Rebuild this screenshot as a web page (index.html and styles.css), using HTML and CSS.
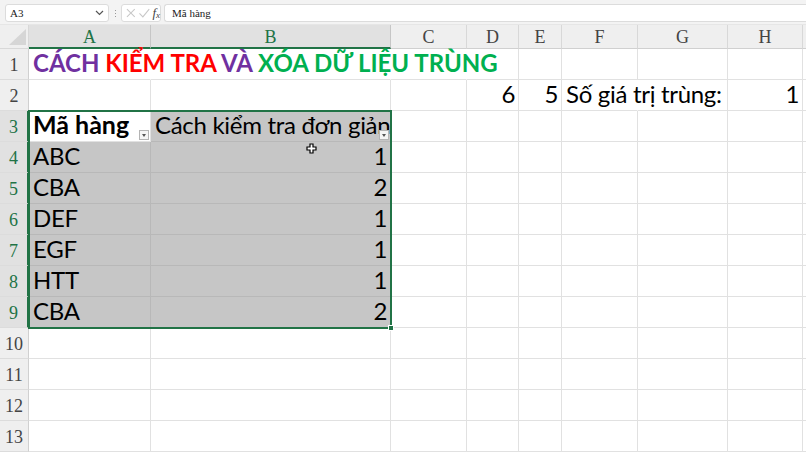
FILE: index.html
```html
<!DOCTYPE html>
<html>
<head>
<meta charset="utf-8">
<link rel="stylesheet" href="styles.css">
</head>
<body>
<div class="topbar">
  <div class="namebox"><span>A3</span>
    <svg class="chev" width="9" height="6" viewBox="0 0 9 6"><path d="M1 1 L4.5 4.5 L8 1" fill="none" stroke="#555" stroke-width="1.2"/></svg>
  </div>
  <div class="dots"><i></i><i></i><i></i></div>
  <div class="fxbox">
    <svg width="12" height="12" viewBox="0 0 12 12"><path d="M2 2 L10 10 M10 2 L2 10" stroke="#c8c8c8" stroke-width="1.1"/></svg>
    <svg width="13" height="12" viewBox="0 0 13 12"><path d="M1.5 6.5 L5 10 L11.5 2" fill="none" stroke="#c8c8c8" stroke-width="1.1"/></svg>
    <span class="fx">f<sub>x</sub></span>
  </div>
  <div class="formula">Mã hàng</div>
</div>

<div class="sheet">
  <div class="grid">
    <div class="corner"><svg width="22" height="18" viewBox="0 0 22 18"><path d="M21 1 L21 17 L4 17 Z" fill="#d6d6d6"/></svg></div>
    <div class="ch sel">A</div>
    <div class="ch sel">B</div>
    <div class="ch">C</div>
    <div class="ch">D</div>
    <div class="ch">E</div>
    <div class="ch">F</div>
    <div class="ch">G</div>
    <div class="ch">H</div>
    <div class="ch last"></div>

    <!-- row 1 -->
    <div class="rh">1</div>
    <div class="c nr title"><span><span class="purple">CÁCH</span> <span class="red">KIỂM TRA</span> <span class="purple">VÀ</span> <span class="green">XÓA DỮ LIỆU TRÙNG</span></span></div>
    <div class="c nr"></div><div class="c nr"></div><div class="c"></div><div class="c"></div><div class="c"></div><div class="c"></div><div class="c"></div><div class="c last"></div>

    <!-- row 2 -->
    <div class="rh">2</div>
    <div class="c"></div><div class="c"></div><div class="c"></div>
    <div class="c num">6</div><div class="c num">5</div>
    <div class="c nr txt">Số giá trị trùng:</div><div class="c"></div>
    <div class="c num">1</div><div class="c last"></div>

    <!-- row 3 -->
    <div class="rh rsel">3</div>
    <div class="c active bold txt">Mã hàng<span class="filt"></span></div>
    <div class="c s txt">Cách kiểm tra đơn giản<span class="filt"></span></div>
    <div class="c"></div><div class="c"></div><div class="c"></div><div class="c"></div><div class="c"></div><div class="c"></div><div class="c last"></div>

    <div class="rh rsel">4</div>
    <div class="c s txt">ABC</div><div class="c s num">1</div>
    <div class="c"></div><div class="c"></div><div class="c"></div><div class="c"></div><div class="c"></div><div class="c"></div><div class="c last"></div>

    <div class="rh rsel">5</div>
    <div class="c s txt">CBA</div><div class="c s num">2</div>
    <div class="c"></div><div class="c"></div><div class="c"></div><div class="c"></div><div class="c"></div><div class="c"></div><div class="c last"></div>

    <div class="rh rsel">6</div>
    <div class="c s txt">DEF</div><div class="c s num">1</div>
    <div class="c"></div><div class="c"></div><div class="c"></div><div class="c"></div><div class="c"></div><div class="c"></div><div class="c last"></div>

    <div class="rh rsel">7</div>
    <div class="c s txt">EGF</div><div class="c s num">1</div>
    <div class="c"></div><div class="c"></div><div class="c"></div><div class="c"></div><div class="c"></div><div class="c"></div><div class="c last"></div>

    <div class="rh rsel">8</div>
    <div class="c s txt">HTT</div><div class="c s num">1</div>
    <div class="c"></div><div class="c"></div><div class="c"></div><div class="c"></div><div class="c"></div><div class="c"></div><div class="c last"></div>

    <div class="rh rsel">9</div>
    <div class="c s txt">CBA</div><div class="c s num">2</div>
    <div class="c"></div><div class="c"></div><div class="c"></div><div class="c"></div><div class="c"></div><div class="c"></div><div class="c last"></div>

    <div class="rh">10</div>
    <div class="c"></div><div class="c"></div><div class="c"></div><div class="c"></div><div class="c"></div><div class="c"></div><div class="c"></div><div class="c"></div><div class="c last"></div>
    <div class="rh">11</div>
    <div class="c"></div><div class="c"></div><div class="c"></div><div class="c"></div><div class="c"></div><div class="c"></div><div class="c"></div><div class="c"></div><div class="c last"></div>
    <div class="rh">12</div>
    <div class="c"></div><div class="c"></div><div class="c"></div><div class="c"></div><div class="c"></div><div class="c"></div><div class="c"></div><div class="c"></div><div class="c last"></div>
    <div class="rh">13</div>
    <div class="c"></div><div class="c"></div><div class="c"></div><div class="c"></div><div class="c"></div><div class="c"></div><div class="c"></div><div class="c"></div><div class="c last"></div>
  </div>
  <div class="selection"><span class="handle"></span></div>
  <svg class="cursor" width="11" height="11" viewBox="0 0 11 11"><path d="M4 1 H7 V4 H10 V7 H7 V10 H4 V7 H1 V4 H4 Z" fill="#fff" stroke="#000" stroke-width="1.2"/></svg>
</div>
</body>
</html>
```
FILE: styles.css
```css
* { box-sizing: border-box; }
html, body { margin: 0; padding: 0; background: #fff; }
body { width: 806px; height: 455px; overflow: hidden; font-family: "Lato", "Liberation Sans", sans-serif; }

.topbar {
  height: 25px;
  background: #f3f3f3;
  display: flex;
  align-items: flex-start;
  padding-top: 4px;
  padding-left: 5px;
  border-bottom: 1px solid #e6e6e6;
}
.namebox {
  width: 104px; height: 18px;
  background: #fff;
  border: 1px solid #dcdcdc;
  border-radius: 3px;
  display: flex; align-items: center; justify-content: space-between;
  padding: 0 4px 0 4px;
  font-family: "Liberation Serif", serif; font-size: 11px; color: #222;
}
.dots { width: 12px; display: flex; flex-direction: column; align-items: center; justify-content: center; gap: 2px; height: 18px; }
.dots i { width: 1px; height: 1px; background: #999; display: block; }
.fxbox {
  width: 40px; height: 18px;
  background: #fff; border: 1px solid #dcdcdc; border-radius: 3px;
  display: flex; align-items: center; gap: 1px; padding-left: 3px;
}
.fx { font-family: "Liberation Serif", serif; font-style: italic; font-size: 13px; color: #444; margin-left: 1px; }
.fx sub { font-size: 9px; vertical-align: -1px; }
.formula {
  flex: 1; height: 18px; margin-left: 3px;
  background: #fff; border: 1px solid #dcdcdc; border-right: none; border-radius: 3px 0 0 3px;
  font-family: "Liberation Serif", serif; font-size: 11px; color: #222;
  padding-left: 7px; line-height: 16px;
}

.sheet { position: relative; }
.grid {
  display: grid;
  grid-template-columns: 29px 122px 240px 76px 52px 43px 76px 90px 75px 3px;
  grid-template-rows: 24px repeat(13, 31px);
}
.corner { background: #efefef; border-right: 1px solid #d8d8d8; border-bottom: 1px solid #d8d8d8; display: flex; align-items: flex-end; justify-content: flex-end; padding: 0 1px 2px 0; }
.ch {
  background: #efefef;
  border-right: 1px solid #d8d8d8;
  border-bottom: 1px solid #d0d0d0;
  font-family: "Liberation Serif", serif; font-size: 18px; color: #444;
  display: flex; align-items: center; justify-content: center; padding-top: 2px;
}
.ch.sel { background: #e1e1e1; color: #217346; border-bottom: 2px solid #217346; border-right-color: #c6c6c6; }
.ch.last { border-right: none; }
.rh {
  background: #efefef;
  border-right: 1px solid #d0d0d0;
  border-bottom: 1px solid #dcdcdc;
  font-family: "Liberation Serif", serif; font-size: 18px; color: #444;
  display: flex; align-items: flex-end; justify-content: center; padding-bottom: 3px; padding-left: 0;
}
.rh.rsel { background: #e1e1e1; color: #217346; border-right: 2px solid #217346; }

.c {
  border-right: 1px solid #e1e1e1;
  border-bottom: 1px solid #e1e1e1;
  font-size: 24px; letter-spacing: -0.3px; color: #000;
  display: flex; align-items: flex-end;
  padding: 0 3px 2px 4px;
  white-space: nowrap;
  position: relative;
  line-height: 29px;
}
.c.last { border-right: none; }
.c.nr { border-right-color: transparent; }
.c.num { justify-content: flex-end; }
.c.s { background: #c6c6c6; border-right-color: #b8b8b8; border-bottom-color: #b8b8b8; }
.c.active { background: #fff; }
.c.bold { font-weight: 700; font-size: 25px; letter-spacing: 0; }
.title { font-weight: 700; overflow: visible; z-index: 2; letter-spacing: 0; font-size: 24px; }
.purple { color: #7030a0; }
.red { color: #ff0000; }
.green { color: #00b050; }

.filt {
  position: absolute; right: 1px; bottom: 1px;
  width: 10px; height: 10px;
  background: #f5f5f5; border: 1px solid #b4b4b4;
}
.filt::after {
  content: ""; position: absolute; left: 2px; top: 3px;
  border-left: 2.5px solid transparent; border-right: 2.5px solid transparent; border-top: 3px solid #555;
}

.selection {
  position: absolute;
  left: 28px; top: 85px; width: 364px; height: 219px;
  border: 2px solid #217346;
  pointer-events: none;
}
.handle {
  position: absolute; right: -4px; bottom: -4px;
  width: 6px; height: 6px; background: #217346; border: 1px solid #fff;
}
.cursor { position: absolute; left: 306px; top: 118px; }
```
